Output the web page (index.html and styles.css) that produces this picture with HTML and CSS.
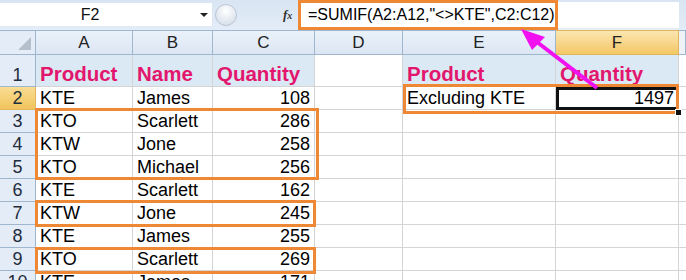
FILE: index.html
```html
<!DOCTYPE html>
<html>
<head>
<meta charset="utf-8">
<link rel="stylesheet" href="styles.css">
</head>
<body>
<div class="page">
  <div class="fbar">
    <div class="namebox"><span class="name">F2</span><span class="drop"></span></div>
    <div class="fmid">
      <span class="knob"></span>
      <span class="fx"><i>f</i><i class="x">x</i></span>
    </div>
    <div class="formula">=SUMIF(A2:A12,"&lt;&gt;KTE",C2:C12)</div>
    <div class="fright"></div>
  </div>
  <div class="sheet">
    <div class="corner"><span class="tri"></span></div>
    <div class="ch">A</div><div class="ch">B</div><div class="ch">C</div><div class="ch">D</div><div class="ch">E</div><div class="ch sel">F</div><div class="ch end"></div>

    <div class="rh">1</div>
    <div class="c hd">Product</div><div class="c hd">Name</div><div class="c hd">Quantity</div><div class="c"></div><div class="c hd">Product</div><div class="c hd">Quantity</div><div class="c end"></div>

    <div class="rh sel">2</div>
    <div class="c">KTE</div><div class="c">James</div><div class="c num">108</div><div class="c"></div><div class="c">Excluding KTE</div><div class="c num active">1497</div><div class="c end"></div>

    <div class="rh">3</div>
    <div class="c">KTO</div><div class="c">Scarlett</div><div class="c num">286</div><div class="c"></div><div class="c"></div><div class="c"></div><div class="c end"></div>

    <div class="rh">4</div>
    <div class="c">KTW</div><div class="c">Jone</div><div class="c num">258</div><div class="c"></div><div class="c"></div><div class="c"></div><div class="c end"></div>

    <div class="rh">5</div>
    <div class="c">KTO</div><div class="c">Michael</div><div class="c num">256</div><div class="c"></div><div class="c"></div><div class="c"></div><div class="c end"></div>

    <div class="rh">6</div>
    <div class="c">KTE</div><div class="c">Scarlett</div><div class="c num">162</div><div class="c"></div><div class="c"></div><div class="c"></div><div class="c end"></div>

    <div class="rh">7</div>
    <div class="c">KTW</div><div class="c">Jone</div><div class="c num">245</div><div class="c"></div><div class="c"></div><div class="c"></div><div class="c end"></div>

    <div class="rh">8</div>
    <div class="c">KTE</div><div class="c">James</div><div class="c num">255</div><div class="c"></div><div class="c"></div><div class="c"></div><div class="c end"></div>

    <div class="rh">9</div>
    <div class="c">KTO</div><div class="c">Scarlett</div><div class="c num">269</div><div class="c"></div><div class="c"></div><div class="c"></div><div class="c end"></div>

    <div class="rh">10</div>
    <div class="c">KTE</div><div class="c">James</div><div class="c num">171</div><div class="c"></div><div class="c"></div><div class="c"></div><div class="c end"></div>
  </div>

  <div class="box b1"></div>
  <div class="box b2"></div>
  <div class="box b3"></div>
  <div class="box b4"></div>
  <div class="handle"></div>
  <svg class="arrow" width="686" height="280" viewBox="0 0 686 280">
    <line x1="597" y1="88" x2="533" y2="39" stroke="#f010f0" stroke-width="4"/>
    <polygon points="521,29 545,37 532,50" fill="#f010f0"/>
  </svg>
</div>
</body>
</html>
```

FILE: styles.css
```css
html, body { margin: 0; padding: 0; }
body { width: 686px; height: 280px; overflow: hidden; background: #fff; font-family: "Liberation Sans", Arial, sans-serif; }
.page { position: relative; width: 686px; height: 280px; overflow: hidden; }

.fbar { display: flex; height: 30px; background: linear-gradient(#d9e5f3, #e3ecf7); }
.namebox { width: 212px; margin: 3px 0 4px 0; background: #fff; display: flex; align-items: center; position: relative; }
.name { flex: 1; text-align: center; font-size: 16px; color: #111; padding-right: 20px; }
.drop { width: 0; height: 0; border-left: 4px solid transparent; border-right: 4px solid transparent; border-top: 4px solid #222; margin-right: 4px; }
.fmid { width: 86px; display: flex; align-items: center; }
.knob { width: 22px; height: 22px; margin-left: 3px; border-radius: 50%; border: 1px solid #b9c6d6; background: radial-gradient(circle at 50% 30%, #fff 0, #e9eef4 45%, #cfd8e3 100%); box-sizing: border-box; }
.fx { margin-left: 46px; font-family: "Liberation Serif", serif; font-style: italic; font-size: 13px; color: #333; font-weight: bold; }
.fx .x { font-size: 10px; }
.formula { width: 260px; box-sizing: border-box; border: 3px solid #ee8834; background: #fff; font-size: 16px; color: #000; padding-left: 7px; line-height: 24px; }
.fright { flex: 1; background: #fff; margin: 2px 7px 2px 0; }

.sheet { display: grid; grid-template-columns: 36px 97px 80px 102px 88px 153px 123px 1fr; grid-template-rows: 25px 32px repeat(9, 23px); }
.sheet > div { box-sizing: border-box; border-right: 1px solid #d4d4d4; border-bottom: 1px solid #d4d4d4; }
.corner { background: #e4ecf7; border-color: #9eb6ce !important; border-top: 1px solid #9eb6ce; position: relative; }
.tri { position: absolute; right: 4px; bottom: 4px; width: 0; height: 0; border-left: 13px solid transparent; border-bottom: 13px solid #b4bfcb; }
.ch { background: linear-gradient(#eaf1fa, #dce6f3); border-color: #9eb6ce !important; border-top: 1px solid #9eb6ce; text-align: center; font-size: 17px; color: #222; line-height: 23px; }
.ch.sel { background: linear-gradient(#fbe6b1, #f3c765); border-color: #e0b75d !important; }
.ch.end { background: #eef2f7; }
.rh { background: #e4ecf7; border-color: #9eb6ce !important; font-size: 18px; color: #1f2d3d; display: flex; align-items: flex-end; justify-content: center; line-height: 21px; }
.rh.sel { background: linear-gradient(#f9dd94, #f1c45c); border-color: #e0b75d !important; }
.c { font-size: 18px; color: #000; padding: 0 0 0 4px; display: flex; align-items: flex-end; line-height: 21px; white-space: nowrap; overflow: hidden; }
.c.num { justify-content: flex-end; padding: 0 4px 0 0; }
.c.hd { background: #dbe9f4; color: #e2166c; font-weight: bold; font-size: 20.5px; line-height: 25px; }
.c.end { border-right: none; }
.c.active { outline: 3px solid #111; outline-offset: -3px; }

.box { position: absolute; border: 3px solid #ee8834; box-sizing: border-box; pointer-events: none; }
.b1 { left: 35px; top: 108px; width: 284px; height: 72px; }
.b2 { left: 35px; top: 200px; width: 281px; height: 27px; }
.b3 { left: 35px; top: 247px; width: 281px; height: 27px; }
.b4 { left: 403px; top: 84px; width: 276px; height: 30px; }
.handle { position: absolute; left: 675px; top: 109px; width: 5px; height: 5px; background: #111; border: 1px solid #fff; }
.arrow { position: absolute; left: 0; top: 0; pointer-events: none; }
```
